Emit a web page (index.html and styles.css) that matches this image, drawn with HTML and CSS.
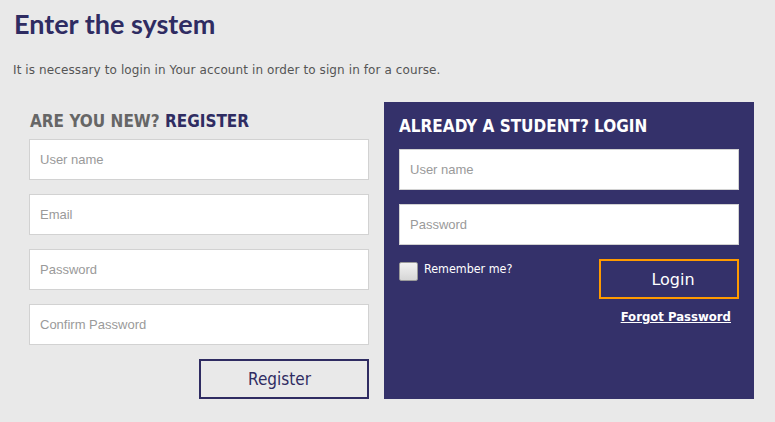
FILE: index.html
```html
<!DOCTYPE html>
<html>
<head>
<meta charset="utf-8">
<link rel="stylesheet" href="styles.css">
</head>
<body>
<div class="page">
  <h1 class="title">Enter the system</h1>
  <p class="lead">It is necessary to login in Your account in order to sign in for a course.</p>
  <div class="columns">
    <form class="register">
      <h2 class="reg-heading"><span class="muted">ARE YOU NEW?</span> REGISTER</h2>
      <input class="field" type="text" placeholder="User name">
      <input class="field" type="text" placeholder="Email">
      <input class="field" type="password" placeholder="Password">
      <input class="field" type="password" placeholder="Confirm Password">
      <button class="btn-register" type="button">Register</button>
    </form>
    <form class="login">
      <h2 class="login-heading">ALREADY A STUDENT? LOGIN</h2>
      <input class="field" type="text" placeholder="User name">
      <input class="field" type="password" placeholder="Password">
      <div class="login-row">
        <label class="remember"><span class="check"></span><span class="remember-text">Remember me?</span></label>
        <div class="login-actions">
          <button class="btn-login" type="button">Login</button>
          <a class="forgot" href="#">Forgot Password</a>
        </div>
      </div>
    </form>
  </div>
</div>
</body>
</html>
```
FILE: styles.css
```css
* { box-sizing: border-box; }
html, body { margin: 0; padding: 0; }
body {
  background: #e9e9e9;
  width: 775px;
  height: 422px;
  overflow: hidden;
}
.page { padding: 9px 14px 0; }
.title {
  margin: 0;
  font-family: Lato, sans-serif;
  font-weight: 700;
  font-size: 27px;
  line-height: 30px;
  color: #2f2c62;
}
.lead {
  margin: 23px 0 0 -1px;
  font-family: "DejaVu Sans", sans-serif;
  font-size: 12px;
  line-height: 16px;
  letter-spacing: 0.1px;
  color: #555;
}
.columns {
  display: flex;
  gap: 15px;
  margin-top: 24px;
  padding-left: 15px;
}
.register {
  width: 340px;
  padding-top: 9px;
  display: flex;
  flex-direction: column;
}
.reg-heading, .login-heading {
  margin: 0 0 8px 1px;
  font-family: "DejaVu Sans Condensed", "DejaVu Sans", sans-serif;
  font-weight: 700;
  font-size: 17px;
  line-height: 20px;
  color: #2f2c62;
}
.muted { color: #666; }
.field {
  display: block;
  width: 340px;
  height: 41px;
  margin: 0 0 14px;
  padding: 0 10px;
  border: 1px solid #d2d2d2;
  background: #fff;
  font-family: "Liberation Sans", Arial, sans-serif;
  font-size: 13px;
  color: #333;
  outline: none;
}
.field::placeholder { color: #9a9a9a; }
.btn-register {
  align-self: flex-end;
  width: 170px;
  height: 40px;
  border: 2px solid #2f2c62;
  background: transparent;
  color: #2f2c62;
  font-family: "DejaVu Sans Condensed", "DejaVu Sans", sans-serif;
  font-size: 17px;
  padding: 0 9px 0 0;
}
.login {
  width: 370px;
  height: 297px;
  padding: 14px 15px 15px;
  background: #34316a;
}
.login-heading {
  color: #fff;
  margin: 0 0 13px;
}
.login-row {
  display: flex;
  justify-content: space-between;
  align-items: flex-start;
}
.remember {
  display: flex;
  align-items: flex-start;
  gap: 6px;
  margin-top: 3px;
}
.check {
  width: 19px;
  height: 19px;
  border: 1px solid #9a9a9a;
  border-radius: 2px;
  background: linear-gradient(#f2f2f2, #d6d6d6);
}
.remember-text {
  font-family: "DejaVu Sans Condensed", "DejaVu Sans", sans-serif;
  font-size: 12.4px;
  line-height: 14px;
  color: #fff;
}
.login-actions {
  display: flex;
  flex-direction: column;
  align-items: flex-end;
}
.btn-login {
  width: 140px;
  height: 40px;
  border: 2px solid #ff9a00;
  background: transparent;
  color: #fff;
  font-family: "DejaVu Sans", sans-serif;
  font-size: 16px;
  padding: 0 0 0 8px;
}
.forgot {
  margin: 11px 8px 0 0;
  font-family: "DejaVu Sans Condensed", "DejaVu Sans", sans-serif;
  font-weight: 700;
  font-size: 13px;
  line-height: 14px;
  color: #fff;
  text-decoration: underline;
}
```
